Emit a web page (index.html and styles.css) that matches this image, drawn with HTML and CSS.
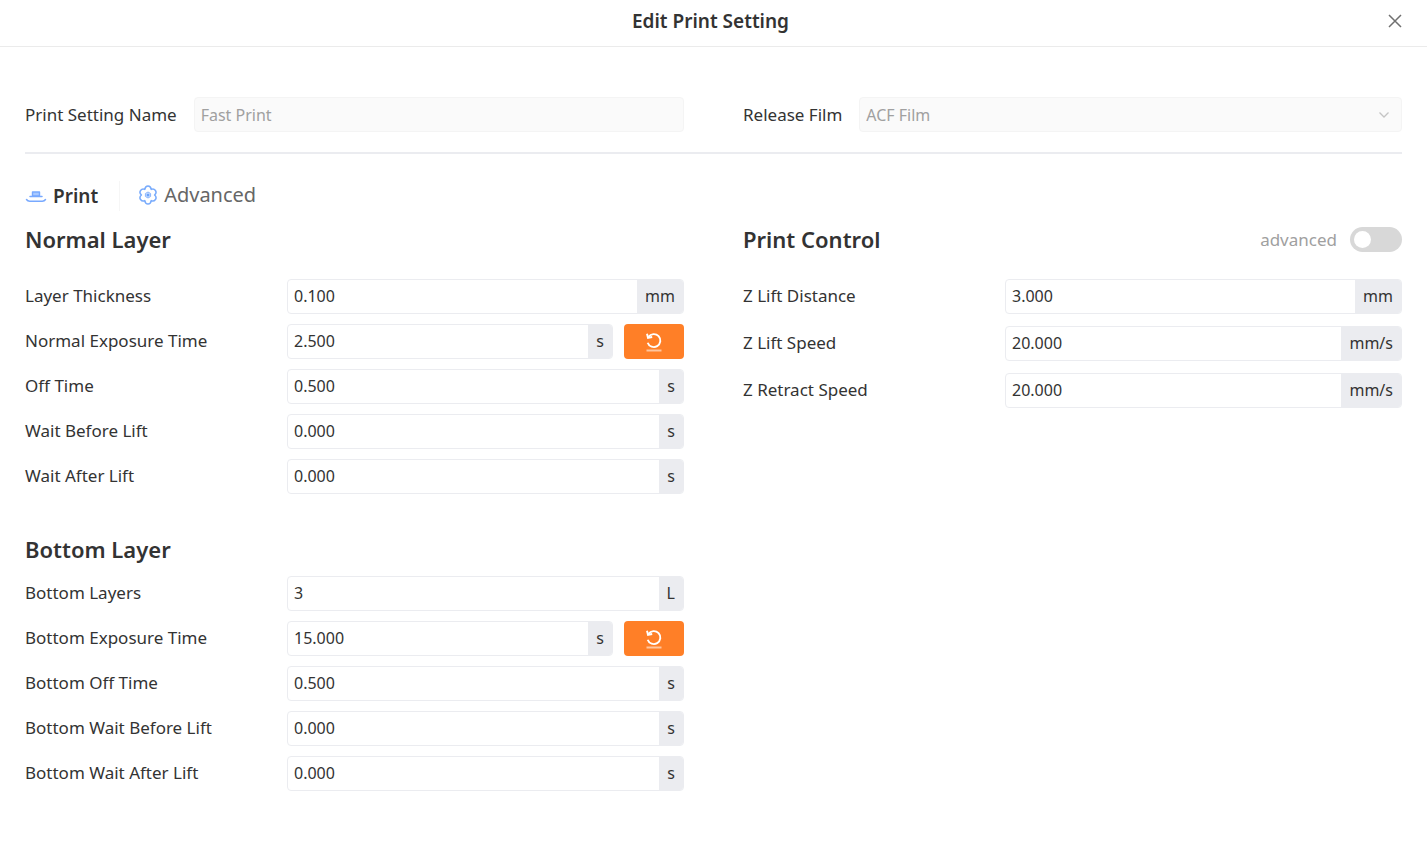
FILE: index.html
```
<!DOCTYPE html>
<html lang="en">
<head>
    <meta charset="UTF-8">
    <meta name="viewport" content="width=device-width, initial-scale=1.0">
    <title>Edit Print Setting</title>
    <link rel="stylesheet" href="styles.css">
</head>
<body>
    <header class="header">
        <h1 class="title">Edit Print Setting</h1>
        <button class="close" type="button" aria-label="Close">
            <svg width="14" height="14" viewBox="0 0 14 14"><path d="M1 1l12 12M13 1L1 13" stroke="#707070" stroke-width="1.5" fill="none"/></svg>
        </button>
    </header>

    <main class="content">
        <div class="columns profile">
            <div class="profile-field">
                <label for="name">Print Setting Name</label>
                <input class="box" id="name" type="text" value="Fast Print" disabled>
            </div>
            <div class="profile-field">
                <label for="film">Release Film</label>
                <div class="select">
                    <select class="box" id="film" disabled>
                        <option>ACF Film</option>
                    </select>
                    <svg class="arrow" width="12" height="8" viewBox="0 0 12 8"><path d="M1.5 1.5L6 6l4.500-4.500" stroke="#c4c4c4" stroke-width="1.3" fill="none"/></svg>
                </div>
            </div>
        </div>

        <nav class="tabs">
            <button class="tab active" type="button">
                <svg width="22" height="20" viewBox="0 0 22 20" fill="none" stroke="#78a9ff" stroke-linecap="round" stroke-linejoin="round">
                    <path d="M7.500 6h7v4h-7z" fill="#a9c9ff" stroke-width="1.400"/>
                    <path d="M5 10.500h12" stroke-width="1.500"/>
                    <path d="M1.500 13.500c.8 1.200 1.800 1.700 3.200 1.700h12.600c1.400 0 2.400-.5 3.200-1.700" stroke-width="1.500"/>
                </svg>
                Print
            </button>
            <button class="tab" type="button">
                <svg width="20" height="20" viewBox="0 0 20 20" fill="none" stroke="#78abfc" stroke-linejoin="round">
                    <path d="M13.200 4.400C16.500 2.800 20 7 16.600 10C20 13 16.500 17.200 13.200 15.600C12.500 20.200 7.500 20.200 6.800 15.600C3.500 17.200 0 13 3.400 10C0 7 3.500 2.800 6.800 4.400C7.500-.2 12.500-.2 13.200 4.400z" stroke-width="1.500"/>
                    <path d="M10 7l2.600 1.500v3L10 13l-2.600-1.500v-3z" fill="#d3e4ff" stroke="#8bb6fc"/>
                    <circle cx="10" cy="10" r="1.500" fill="#6ba3fb" stroke="none"/>
                </svg>
                Advanced
            </button>
        </nav>

        <div class="columns">
            <div>
                <section class="group">
                    <h2>Normal Layer</h2>
                    <div class="rows">
                        <div class="row">
                            <label for="thickness">Layer Thickness</label>
                            <div class="field"><input id="thickness" type="text" value="0.100"><span class="unit">mm</span></div>
                        </div>
                        <div class="row">
                            <label for="exposure">Normal Exposure Time</label>
                            <div class="field"><input id="exposure" type="text" value="2.500"><span class="unit">s</span></div>
                            <button class="reset" type="button" aria-label="Reset exposure time">
                                <svg width="18" height="20" viewBox="0 0 18 20" fill="none" stroke="#fff"><path d="M3.500 4.900A6.500 6.500 0 1 1 2.700 10.700" stroke-width="1.900"/><path d="M2 1.800l1 4 4.200-.8" stroke-width="1.900"/><path d="M1.500 18.500h15" stroke-width="2" opacity=".55"/></svg>
                            </button>
                        </div>
                        <div class="row">
                            <label for="off">Off Time</label>
                            <div class="field"><input id="off" type="text" value="0.500"><span class="unit">s</span></div>
                        </div>
                        <div class="row">
                            <label for="before">Wait Before Lift</label>
                            <div class="field"><input id="before" type="text" value="0.000"><span class="unit">s</span></div>
                        </div>
                        <div class="row">
                            <label for="after">Wait After Lift</label>
                            <div class="field"><input id="after" type="text" value="0.000"><span class="unit">s</span></div>
                        </div>
                    </div>
                </section>

                <section class="group bottom">
                    <h2>Bottom Layer</h2>
                    <div class="rows">
                        <div class="row">
                            <label for="b-layers">Bottom Layers</label>
                            <div class="field"><input id="b-layers" type="text" value="3"><span class="unit">L</span></div>
                        </div>
                        <div class="row">
                            <label for="b-exposure">Bottom Exposure Time</label>
                            <div class="field"><input id="b-exposure" type="text" value="15.000"><span class="unit">s</span></div>
                            <button class="reset" type="button" aria-label="Reset bottom exposure time">
                                <svg width="18" height="20" viewBox="0 0 18 20" fill="none" stroke="#fff"><path d="M3.500 4.900A6.500 6.500 0 1 1 2.700 10.700" stroke-width="1.900"/><path d="M2 1.800l1 4 4.200-.8" stroke-width="1.900"/><path d="M1.500 18.500h15" stroke-width="2" opacity=".55"/></svg>
                            </button>
                        </div>
                        <div class="row">
                            <label for="b-off">Bottom Off Time</label>
                            <div class="field"><input id="b-off" type="text" value="0.500"><span class="unit">s</span></div>
                        </div>
                        <div class="row">
                            <label for="b-before">Bottom Wait Before Lift</label>
                            <div class="field"><input id="b-before" type="text" value="0.000"><span class="unit">s</span></div>
                        </div>
                        <div class="row">
                            <label for="b-after">Bottom Wait After Lift</label>
                            <div class="field"><input id="b-after" type="text" value="0.000"><span class="unit">s</span></div>
                        </div>
                    </div>
                </section>
            </div>

            <section class="group control">
                <div class="group-head">
                    <h2>Print Control</h2>
                    <label class="switch-label">advanced <input class="switch" type="checkbox"></label>
                </div>
                <div class="rows">
                    <div class="row">
                        <label for="distance">Z Lift Distance</label>
                        <div class="field"><input id="distance" type="text" value="3.000"><span class="unit">mm</span></div>
                    </div>
                    <div class="row">
                        <label for="speed">Z Lift Speed</label>
                        <div class="field"><input id="speed" type="text" value="20.000"><span class="unit">mm/s</span></div>
                    </div>
                    <div class="row">
                        <label for="retract">Z Retract Speed</label>
                        <div class="field"><input id="retract" type="text" value="20.000"><span class="unit">mm/s</span></div>
                    </div>
                </div>
            </section>
        </div>
    </main>
</body>
</html>
```
FILE: styles.css
```
* {
    box-sizing: border-box;
}
body {
    margin: 0;
    background-color: white;
    color: #333;
    font-family: "Noto Sans", sans-serif;
    font-size: 17px;
}
button, input, select {
    font: inherit;
    color: inherit;
}
button {
    padding: 0;
    border: none;
    background: none;
    cursor: pointer;
}
svg {
    display: block;
    flex-shrink: 0;
}
.header {
    position: relative;
    display: flex;
    align-items: center;
    justify-content: center;
    height: 47px;
    padding-bottom: 4px;
    border-bottom: 1px solid #ebebeb;
}
.title {
    margin: 0;
    padding-right: 6px;
    font-size: 19px;
    font-weight: 600;
}
.close {
    position: absolute;
    top: 9px;
    right: 20px;
    display: grid;
    place-items: center;
    width: 24px;
    height: 24px;
}
.content {
    padding: 50px 25px;
}
.columns {
    display: grid;
    grid-template-columns: 1fr 1fr;
    gap: 59px;
}
.profile {
    padding-bottom: 20px;
    border-bottom: 2px solid #ebecf0;
}
.profile-field {
    display: flex;
    align-items: center;
    gap: 17px;
    white-space: nowrap;
}
.box {
    flex: 1;
    width: 100%;
    min-width: 0;
    height: 35px;
    padding: 0 6px;
    border: 1px solid #f4f4f4;
    border-radius: 4px;
    background-color: #fafafa;
    color: #a0a0a0;
    font-size: 16px;
    opacity: 1;
    appearance: none;
}
.select {
    position: relative;
    flex: 1;
}
.select .box {
    display: block;
}
.arrow {
    position: absolute;
    top: 14px;
    right: 12px;
}
.tabs {
    display: flex;
    align-items: center;
    margin-top: 27px;
}
.tab {
    display: flex;
    align-items: center;
    gap: 6px;
    height: 30px;
    color: #666;
    font-size: 20px;
    line-height: 28px;
}
.tab + .tab {
    margin-left: 21px;
    padding-left: 18px;
    padding-bottom: 2px;
    border-left: 1px solid #f6f6f6;
}
.tab.active {
    color: #333;
    font-size: 19px;
    font-weight: 600;
}
.group {
    padding-top: 13px;
}
h2 {
    margin: 0;
    font-size: 22px;
    font-weight: 600;
    line-height: 30px;
}
.rows {
    display: grid;
    gap: 10px;
    margin-top: 25px;
}
.bottom {
    padding-top: 40px;
}
.bottom .rows {
    margin-top: 12px;
}
.control .rows {
    gap: 12px;
}
.row {
    display: flex;
    align-items: center;
}
.row label {
    flex: none;
    width: 262px;
    padding-bottom: 2px;
}
.field {
    display: flex;
    flex: 1;
    min-width: 0;
    height: 35px;
    border: 1px solid #ebecf0;
    border-radius: 4px;
    overflow: hidden;
}
.field input {
    flex: 1;
    min-width: 0;
    padding: 0 6px 2px;
    border: none;
    outline: none;
    background: none;
    font-size: 16px;
}
.unit {
    display: flex;
    align-items: center;
    padding: 0 8px 2px;
    background-color: #ebecf0;
    font-size: 16px;
}
.reset {
    display: grid;
    place-items: center;
    width: 60px;
    height: 35px;
    margin-left: 11px;
    border-radius: 4px;
    background-color: #ff7f27;
}
.group-head {
    display: flex;
    align-items: center;
    justify-content: space-between;
}
.switch-label {
    display: flex;
    align-items: center;
    gap: 13px;
    color: #a0a0a0;
}
.switch {
    width: 52px;
    height: 25px;
    margin: 0;
    padding: 4px;
    border-radius: 13px;
    background-color: #d8d8d8;
    appearance: none;
}
.switch::before {
    content: "";
    display: block;
    width: 17px;
    height: 17px;
    border-radius: 50%;
    background-color: white;
}
.switch:checked {
    background-color: #ff7f27;
}
.switch:checked::before {
    margin-left: auto;
}
```
